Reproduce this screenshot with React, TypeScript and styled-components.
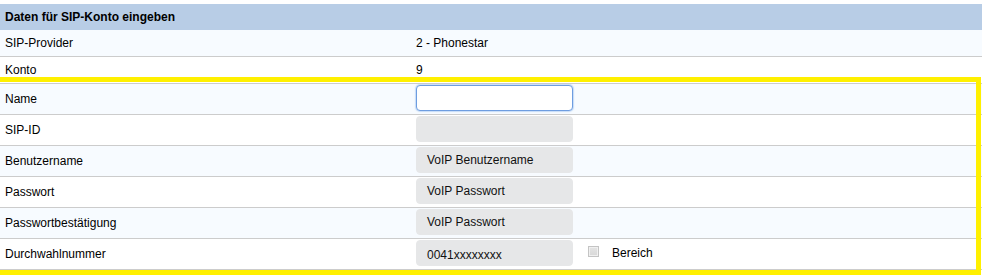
import React from "react";
import styled, { createGlobalStyle } from "styled-components";

const GlobalStyle = createGlobalStyle`
  html, body {
    margin: 0;
    padding: 0;
    background: #ffffff;
  }
  body {
    font-family: "Liberation Sans", Arial, sans-serif;
    font-size: 12px;
    color: #000;
  }
`;

const Page = styled.div`
  position: relative;
  width: 982px;
  padding: 4px 0 5px;
  overflow: hidden;
`;

const Header = styled.div`
  height: 26px;
  display: flex;
  align-items: center;
  padding-left: 5px;
  background: #b8cde6;
  font-weight: bold;
`;

const Row = styled.div<{ $alt?: boolean; $tall?: boolean }>`
  display: grid;
  grid-template-columns: 416px 1fr;
  height: ${({ $tall }) => ($tall ? 30 : 26)}px;
  background: ${({ $alt }) => ($alt ? "#f7fbff" : "#ffffff")};
  border-bottom: 1px solid #cccccc;
`;

const Label = styled.div`
  display: flex;
  align-items: center;
  padding-left: 5px;
`;

const Value = styled.div<{ $tall?: boolean }>`
  display: flex;
  align-items: ${({ $tall }) => ($tall ? "flex-start" : "center")};
  padding-top: ${({ $tall }) => ($tall ? 1 : 0)}px;
`;

const Field = styled.div<{ $focused?: boolean; $low?: boolean }>`
  box-sizing: border-box;
  width: 157px;
  height: 26px;
  display: flex;
  align-items: center;
  padding-left: 10px;
  padding-top: ${({ $low }) => ($low ? 3 : 0)}px;
  border-radius: 4px;
  background: ${({ $focused }) => ($focused ? "#ffffff" : "#e6e7e8")};
  border: ${({ $focused }) =>
    $focused ? "1.5px solid #6e9de0" : "1px solid #e6e7e8"};
  box-shadow: ${({ $focused }) =>
    $focused ? "0 0 1px 1px rgba(150, 190, 240, 0.5)" : "none"};
  color: #111;
`;

const Check = styled.span`
  box-sizing: border-box;
  width: 11px;
  height: 11px;
  margin: 6px 13px 0 15px;
  border: 1px solid #c4c4c4;
  background: linear-gradient(#e4e4e4, #d8d8d8);
  box-shadow: inset 0 0 0 1px #f0f0f0;
`;

const CheckLabel = styled.span`
  margin-top: 6px;
`;

// yellow marker laid over the editable rows
const Highlight = styled.div`
  position: absolute;
  top: 77px;
  left: -10px;
  width: 991px;
  height: 198px;
  box-sizing: border-box;
  border: 5px solid #fff000;
  pointer-events: none;
`;

const fields = [
  { label: "Name", value: "", focused: true },
  { label: "SIP-ID", value: "" },
  { label: "Benutzername", value: "VoIP Benutzername" },
  { label: "Passwort", value: "VoIP Passwort" },
  { label: "Passwortbestätigung", value: "VoIP Passwort" },
];

export default function App() {
  return (
    <>
      <GlobalStyle />
      <Page>
        <Header>Daten für SIP-Konto eingeben</Header>
        <Row $alt>
          <Label>SIP-Provider</Label>
          <Value>2 - Phonestar</Value>
        </Row>
        <Row>
          <Label>Konto</Label>
          <Value>9</Value>
        </Row>
        {fields.map((f, i) => (
          <Row key={f.label} $tall $alt={i % 2 === 0}>
            <Label>{f.label}</Label>
            <Value $tall>
              <Field $focused={f.focused}>{f.value}</Field>
            </Value>
          </Row>
        ))}
        <Row $tall>
          <Label>Durchwahlnummer</Label>
          <Value $tall>
            <Field $low>0041xxxxxxxx</Field>
            <Check />
            <CheckLabel>Bereich</CheckLabel>
          </Value>
        </Row>
        <Highlight />
      </Page>
    </>
  );
}
